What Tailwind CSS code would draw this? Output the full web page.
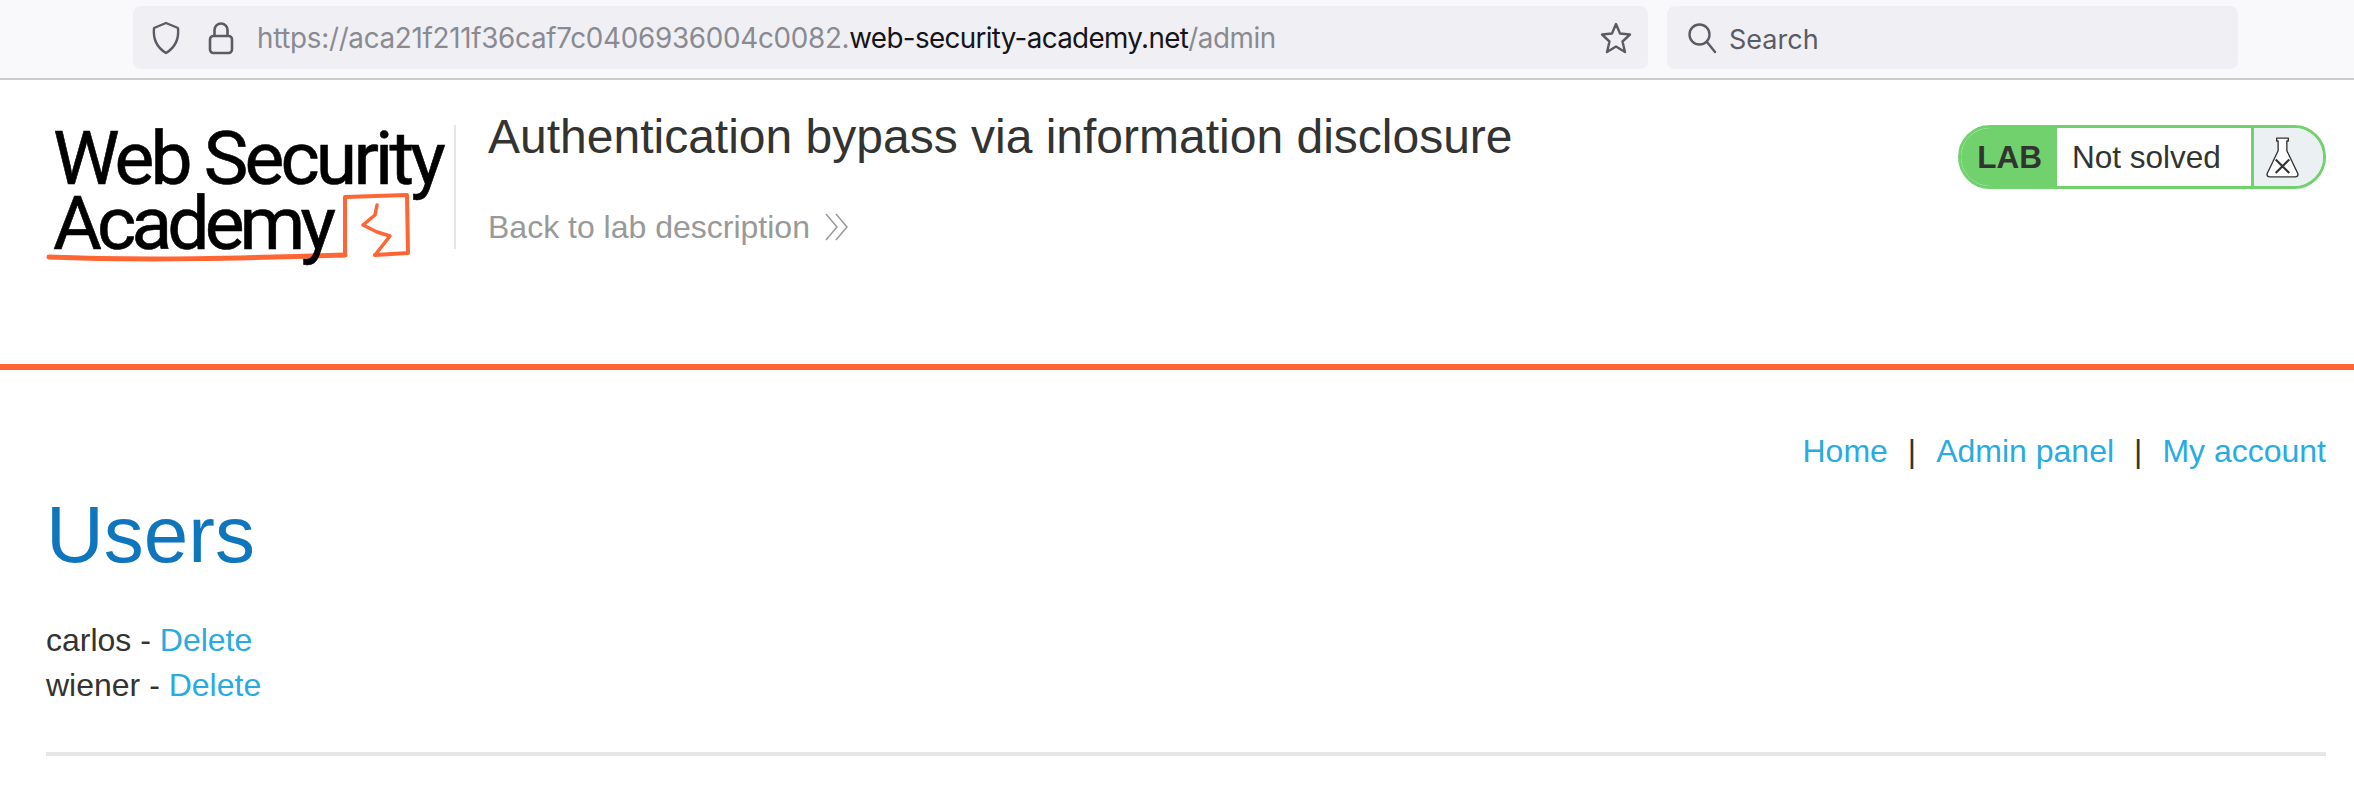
<!DOCTYPE html>
<html lang="en">
<head>
    <meta charset="UTF-8">
    <title>Authentication bypass via information disclosure</title>
    <script src="https://cdn.jsdelivr.net/npm/@tailwindcss/browser@4"></script>
</head>
<body class="bg-white font-['Liberation_Sans',Arial,sans-serif] text-[#333332] overflow-hidden">

<!-- Browser toolbar -->
<div class="h-[80px] bg-[#f9f9fb] border-b-[2px] border-[#cccccc] flex items-start pt-[6px] pl-[133px] gap-[19px]">
    <div class="w-[1515px] h-[63px] bg-[#f0f0f4] rounded-[8px] flex items-center pl-[18px] pr-[15px]">
        <svg class="w-[30px] h-[34px] text-[#5b5b66] shrink-0" viewBox="0 0 30 34" fill="none" stroke="currentColor" stroke-width="2.4" stroke-linejoin="round">
            <path d="M15 2 L27 7 C28 17 25 26 15 32 C5 26 2 17 3 7 Z"/>
        </svg>
        <svg class="w-[26px] h-[34px] ml-[27px] text-[#5b5b66] shrink-0" viewBox="0 0 26 34" fill="none" stroke="currentColor" stroke-width="2.6">
            <rect x="2" y="15" width="22" height="17" rx="3.5"/>
            <path d="M6.5 15 V9 a6.5 6.5 0 0 1 13 0 V15"/>
        </svg>
        <div class="ml-[23px] mt-[3px] font-['Inter',sans-serif] text-[27.8px] tracking-[-0.29px] text-[#8a8a92] whitespace-nowrap">https://aca21f211f36caf7c0406936004c0082.<span class="text-[#15141a] tracking-[-0.66px]">web-security-academy.net</span><span class="tracking-[-0.4px]">/admin</span></div>
        <svg class="w-[34px] h-[34px] ml-auto text-[#5b5b66] shrink-0" viewBox="0 0 34 34" fill="none" stroke="currentColor" stroke-width="2.4" stroke-linejoin="round">
            <path d="M17 3 L21 12.5 L31 13.5 L23.5 20.5 L26 31 L17 25.5 L8 31 L10.5 20.5 L3 13.5 L13 12.5 Z"/>
        </svg>
    </div>
    <div class="w-[571px] h-[63px] bg-[#f0f0f4] rounded-[8px] flex items-center pl-[20px]">
        <svg class="w-[30px] h-[32px] text-[#5b5b66] shrink-0" viewBox="0 0 30 32" fill="none" stroke="currentColor" stroke-width="2.4" stroke-linecap="round">
            <circle cx="12.5" cy="12.5" r="10"/>
            <path d="M20 20 L28 30"/>
        </svg>
        <div class="ml-[12px] mt-[5px] font-['Inter',sans-serif] text-[27px] text-[#5b5b66]">Search</div>
    </div>
</div>

<!-- Lab header -->
<header class="h-[290px] border-b-[6px] border-[#ff6633] flex items-start pt-[45px] pl-[46px] pr-[28px]">
    <div class="relative w-[408px] h-[140px] shrink-0 text-black font-['Roboto',sans-serif] text-[75px] leading-[65px] whitespace-nowrap [-webkit-text-stroke:0.6px_black]">
        <svg class="absolute left-0 top-0 w-[408px] h-[140px]" viewBox="0 0 408 140" fill="none" stroke="#ff6633" stroke-linejoin="round" stroke-linecap="round">
            <path d="M3 132 C100 136 200 133 299 130" stroke-width="5"/>
            <path d="M299 130 L299 72 L361 70 L362 128 L329 130" stroke-width="4"/>
            <path d="M329 130 L344 111 L331 107 L317 100 L329 90 L331 80" stroke-width="3.5"/>
        </svg>
        <div class="relative pl-[7px] pt-[1px] tracking-[-3.8px]">Web Security</div>
        <div class="relative pl-[7px] tracking-[-4.9px]">Academy</div>
    </div>
    <div class="w-[2px] h-[124px] bg-[#e6e6e6] shrink-0"></div>
    <div class="ml-[32px]">
        <h2 class="text-[48px] leading-[54px] -mt-[15px]">Authentication bypass via information disclosure</h2>
        <div class="mt-[45px] flex items-center text-[32px] leading-[36px] text-[#999999]">
            Back to lab description
            <svg class="w-[26px] h-[28px] ml-[14px]" viewBox="0 0 26 28" fill="none" stroke="#999999" stroke-width="1.5">
                <path d="M2 1 L13 14 L2 27"/>
                <path d="M12 1 L23 14 L12 27"/>
            </svg>
        </div>
    </div>
    <div class="ml-auto w-[368px] h-[64px] border-[3px] border-[#70d16d] rounded-[32px] overflow-hidden flex text-[31.5px]">
        <div class="w-[96px] bg-[#70d16d] font-bold flex items-center justify-end pr-[15px] pt-[2px]">LAB</div>
        <div class="flex-1 flex items-center pl-[15px] pt-[2px]">Not solved</div>
        <div class="w-[72px] bg-[#ebf0f2] border-l-[3px] border-[#70d16d] flex items-center pl-[12px]">
            <svg class="w-[33px] h-[41px]" viewBox="0 0 34 42" fill="#ffffff" stroke="#333332" stroke-width="1.4" stroke-linejoin="round">
                <path d="M11 1 H23 V4 H21.5 V14 L33 38 Q33 41 30 41 H4 Q1 41 1 38 L12.5 14 V4 H11 Z"/>
                <path d="M10 23 L24 37 M24 23 L10 37" stroke-width="2.2" fill="none"/>
            </svg>
        </div>
    </div>
</header>

<!-- Page content -->
<main class="pl-[46px] pr-[28px]">
    <nav class="flex justify-end items-center text-[32px] leading-[36px] mt-[63px] gap-[20px]">
        <a href="#" class="text-[#29abe2]">Home</a>
        <span>|</span>
        <a href="#" class="text-[#29abe2]">Admin panel</a>
        <span>|</span>
        <a href="#" class="text-[#29abe2]">My account</a>
    </nav>
    <h1 class="text-[80px] leading-[92px] text-[#0f75bc] mt-[20px]">Users</h1>
    <div class="mt-[37px] text-[32px] leading-[45px]">
        <div>carlos - <a href="#" class="text-[#29abe2]">Delete</a></div>
        <div>wiener - <a href="#" class="text-[#29abe2]">Delete</a></div>
    </div>
    <hr class="mt-[44px] border-0 h-[4px] bg-[#e6e6e6]">
</main>

</body>
</html>
